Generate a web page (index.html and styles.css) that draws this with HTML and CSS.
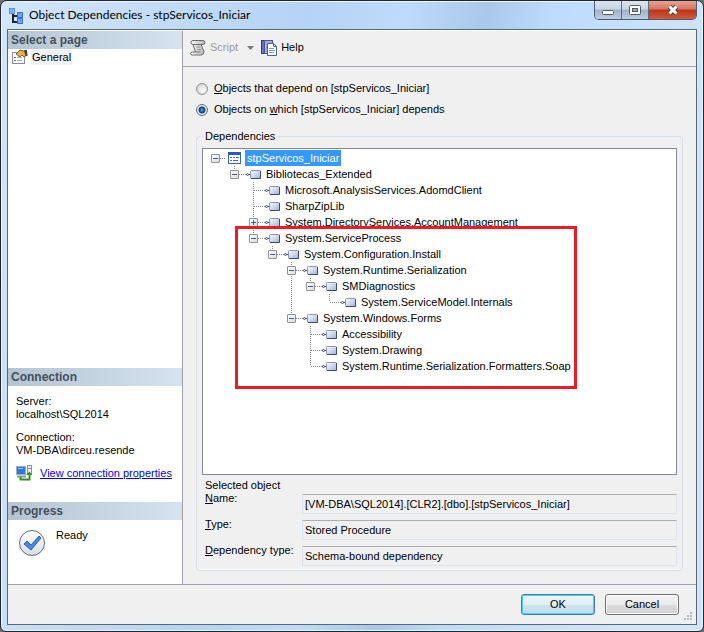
FILE: index.html
```html
<!DOCTYPE html>
<html lang="en">
<head>
  <meta charset="UTF-8">
  <meta name="viewport" content="width=device-width, initial-scale=1.0">
  <title>Object Dependencies - stpServicos_Iniciar</title>
  <link rel="stylesheet" href="styles.css">
</head>
<body>
  <!-- Shared icons -->
  <svg class="defs" width="0" height="0">
    <defs>
      <linearGradient id="blue-box" x1="0" y1="0" x2="1" y2="1">
        <stop offset="0" stop-color="#ffffff"/>
        <stop offset="1" stop-color="#9fb0d8"/>
      </linearGradient>
      <linearGradient id="disc" x1="0" y1="0" x2="0" y2="1">
        <stop offset="0" stop-color="#ffffff"/>
        <stop offset="1" stop-color="#d9dde6"/>
      </linearGradient>
      <linearGradient id="scroll" x1="0" y1="0" x2="1" y2="0">
        <stop offset="0" stop-color="#fafafa"/>
        <stop offset="1" stop-color="#b4b4b4"/>
      </linearGradient>
    </defs>
    <symbol id="node" viewBox="0 0 16 16">
      <path d="M0 8.500h1" stroke="#777"/>
      <circle cx="2.500" cy="8.500" r="1" fill="#fff" stroke="#3c4a78"/>
      <path d="M3.500 8.500h2" stroke="#3c4a78"/>
      <rect x="5.500" y="4.500" width="10" height="8" rx="1" fill="url(#blue-box)" stroke="#8a93b0"/>
      <path d="M6 12.500h9.500v-7.500" fill="none" stroke="#3c4878"/>
    </symbol>
  </svg>

  <div class="window">
    <header class="titlebar">
      <svg class="app-icon" width="16" height="16" viewBox="0 0 16 16">
        <path d="M4 5v9h4M4 8h4" fill="none" stroke="#1c2430" stroke-width="2"/>
        <rect x="0.500" y="0.500" width="5" height="5" fill="#7eb0f4" stroke="#5f8fdc"/>
        <rect x="8.500" y="4.500" width="5" height="5" fill="#6ba2f2" stroke="#3f70c8"/>
        <rect x="8.500" y="10.500" width="5" height="5" fill="#6ba2f2" stroke="#3f70c8"/>
      </svg>
      <h1>Object Dependencies - stpServicos_Iniciar</h1>
      <div class="window-buttons">
        <button type="button" class="win-btn" aria-label="Minimize">
          <svg width="14" height="12" viewBox="0 0 14 12"><rect x="1.500" y="6.500" width="11" height="4" rx="1" fill="#fff" stroke="#50586a"/></svg>
        </button>
        <button type="button" class="win-btn" aria-label="Maximize">
          <svg width="14" height="12" viewBox="0 0 14 12"><rect x="1.500" y="1.500" width="11" height="9" rx="1" fill="#fff" stroke="#50586a"/><rect x="4.500" y="4.500" width="5" height="3" fill="#8faac8" stroke="#50586a"/></svg>
        </button>
        <button type="button" class="win-btn close" aria-label="Close">
          <svg width="14" height="12" viewBox="0 0 14 12"><path d="M3.500 2.500l7 7M10.500 2.500l-7 7" stroke="#50404a" stroke-width="5"/><path d="M3.500 2.500l7 7M10.500 2.500l-7 7" stroke="#fff" stroke-width="3"/></svg>
        </button>
      </div>
    </header>

    <div class="client">
      <div class="panes">
        <aside class="sidebar">
          <section class="pages">
            <h2>Select a page</h2>
            <a href="#" class="page-link">
              <svg width="16" height="16" viewBox="0 0 16 16">
                <rect x="0.500" y="3.500" width="12" height="11" fill="#fff" stroke="#8a8a9c"/>
                <path d="M2 8.500h2M2 11.500h2" stroke="#5468c8"/>
                <path d="M5 8.500h5M5 11.500h5" stroke="#a8acc0"/>
                <path d="M4 5l4-4 4 1 3 4-3 2-2-2-2 2z" fill="#e8b04a" stroke="#80602c"/>
                <path d="M12 1l3 0 0.500 6-2 0z" fill="#4a4438"/>
              </svg>
              <span>General</span>
            </a>
          </section>

          <section>
            <h2>Connection</h2>
            <div class="connection">
              <p>Server:<br>localhost\SQL2014</p>
              <p>Connection:<br>VM-DBA\dirceu.resende</p>
              <div class="properties">
                <svg width="16" height="16" viewBox="0 0 16 16">
                  <rect x="0.500" y="1.500" width="9" height="8" fill="#2a78e0" stroke="#a0acc0"/>
                  <path d="M2 3.500h5" stroke="#9cd0ff"/>
                  <path d="M1 11.500h9" stroke="#8894a8" stroke-width="2"/>
                  <rect x="11.500" y="0.500" width="4" height="9" fill="#eceef2" stroke="#8a90a0"/>
                  <path d="M12 3.500h3" stroke="#8a90a0"/>
                  <path d="M4.500 12v2.500h9v-5" fill="none" stroke="#2c9418" stroke-width="2"/>
                  <path d="M10 10l3.500-3.500 2.500 3.500z" fill="#2c9418"/>
                </svg>
                <a href="#">View connection properties</a>
              </div>
            </div>
          </section>

          <section>
            <h2>Progress</h2>
            <div class="progress">
              <svg width="28" height="28" viewBox="0 0 28 28">
                <circle cx="14" cy="14" r="12.500" fill="url(#disc)" stroke="#5b6b8c"/>
                <path d="M6 15l3-3 4 4 8-9 2 2-10 12z" fill="#4a86e4" stroke="#2f62b8"/>
              </svg>
              <span>Ready</span>
            </div>
          </section>
        </aside>

        <main class="content">
          <div class="toolbar">
            <button type="button" class="tool" disabled>
              <svg width="16" height="16" viewBox="0 0 16 16">
                <path d="M3 0.500h10q2 0 2 2t-2 2h-2l3 7q0 3.500-3 3.500h-8.500q-2 0-2-1.500t2-1.500h3l-2.500-7.500q-2 0-2-2t2-2z" fill="url(#scroll)" stroke="#6c6c6c"/>
                <path d="M3 4.500h8M5.500 12h5" stroke="#6c6c6c"/>
                <path d="M6 7h4M7 9.500h4" stroke="#999"/>
              </svg>
              <span>Script</span>
              <svg class="caret" width="7" height="4" viewBox="0 0 7 4"><path d="M0 0h7l-3.500 4z" fill="#777"/></svg>
            </button>
            <button type="button" class="tool">
              <svg width="16" height="16" viewBox="0 0 16 16">
                <rect x="0.500" y="0.500" width="3" height="13" fill="#6670b8" stroke="#343c80"/>
                <rect x="3.500" y="0.500" width="8" height="13" fill="#a4acdc" stroke="#4c5498"/>
                <path d="M6.500 3.500h6l3 3v9h-9z" fill="#fff" stroke="#4a6478"/>
                <path d="M12.500 3.500v3h3" fill="none" stroke="#4a6478"/>
                <path d="M8 8.500h5M8 10.500h6M8 12.500h5" stroke="#6f9cc8"/>
              </svg>
              <span>Help</span>
            </button>
          </div>

          <form class="form">
            <label class="radio"><input type="radio" name="direction"><span><u>O</u>bjects that depend on [stpServicos_Iniciar]</span></label>
            <label class="radio"><input type="radio" name="direction" checked><span>Objects on <u>w</u>hich [stpServicos_Iniciar] depends</span></label>

            <fieldset class="group">
              <legend>Dependencies</legend>
              <div class="tree-box">
                <ul class="tree">
                  <li>
                    <div class="row"><button type="button" class="toggle" aria-label="Collapse"></button><i class="dots"></i>
                      <svg width="16" height="16" viewBox="0 0 16 16">
                        <rect x="2.500" y="2.500" width="12" height="11" fill="#fff" stroke="#3c64b8"/>
                        <path d="M2 3.500h13" stroke="#2c58c0" stroke-width="3"/>
                        <path d="M4 7.500h2M7 7.500h2M4 10.500h2M7 10.500h5M10 7.500h3" stroke="#5468a8"/>
                      </svg>
                      <span class="label selected">stpServicos_Iniciar</span></div>
                    <ul>
                      <li>
                        <div class="row"><button type="button" class="toggle" aria-label="Collapse"></button><i class="dots"></i><svg width="16" height="16"><use href="#node"/></svg><span class="label">Bibliotecas_Extended</span></div>
                        <ul>
                          <li><div class="row"><i class="dots"></i><svg width="16" height="16"><use href="#node"/></svg><span class="label">Microsoft.AnalysisServices.AdomdClient</span></div></li>
                          <li><div class="row"><i class="dots"></i><svg width="16" height="16"><use href="#node"/></svg><span class="label">SharpZipLib</span></div></li>
                          <li><div class="row"><button type="button" class="toggle plus" aria-label="Expand"></button><i class="dots"></i><svg width="16" height="16"><use href="#node"/></svg><span class="label">System.DirectoryServices.AccountManagement</span></div></li>
                          <li>
                            <div class="row"><button type="button" class="toggle" aria-label="Collapse"></button><i class="dots"></i><svg width="16" height="16"><use href="#node"/></svg><span class="label">System.ServiceProcess</span></div>
                            <ul>
                              <li>
                                <div class="row"><button type="button" class="toggle" aria-label="Collapse"></button><i class="dots"></i><svg width="16" height="16"><use href="#node"/></svg><span class="label">System.Configuration.Install</span></div>
                                <ul>
                                  <li>
                                    <div class="row"><button type="button" class="toggle" aria-label="Collapse"></button><i class="dots"></i><svg width="16" height="16"><use href="#node"/></svg><span class="label">System.Runtime.Serialization</span></div>
                                    <ul>
                                      <li>
                                        <div class="row"><button type="button" class="toggle" aria-label="Collapse"></button><i class="dots"></i><svg width="16" height="16"><use href="#node"/></svg><span class="label">SMDiagnostics</span></div>
                                        <ul>
                                          <li><div class="row"><i class="dots"></i><svg width="16" height="16"><use href="#node"/></svg><span class="label">System.ServiceModel.Internals</span></div></li>
                                        </ul>
                                      </li>
                                    </ul>
                                  </li>
                                  <li>
                                    <div class="row"><button type="button" class="toggle" aria-label="Collapse"></button><i class="dots"></i><svg width="16" height="16"><use href="#node"/></svg><span class="label">System.Windows.Forms</span></div>
                                    <ul>
                                      <li><div class="row"><i class="dots"></i><svg width="16" height="16"><use href="#node"/></svg><span class="label">Accessibility</span></div></li>
                                      <li><div class="row"><i class="dots"></i><svg width="16" height="16"><use href="#node"/></svg><span class="label">System.Drawing</span></div></li>
                                      <li><div class="row"><i class="dots"></i><svg width="16" height="16"><use href="#node"/></svg><span class="label">System.Runtime.Serialization.Formatters.Soap</span></div></li>
                                    </ul>
                                  </li>
                                </ul>
                              </li>
                            </ul>
                          </li>
                        </ul>
                      </li>
                    </ul>
                  </li>
                </ul>
                <div class="highlight"></div>
              </div>

              <div class="details">
                <p>Selected object</p>
                <div class="field">
                  <label for="obj-name"><u>N</u>ame:</label>
                  <input type="text" id="obj-name" value="[VM-DBA\SQL2014].[CLR2].[dbo].[stpServicos_Iniciar]" readonly>
                </div>
                <div class="field">
                  <label for="obj-type"><u>T</u>ype:</label>
                  <input type="text" id="obj-type" value="Stored Procedure" readonly>
                </div>
                <div class="field">
                  <label for="obj-dep"><u>D</u>ependency type:</label>
                  <input type="text" id="obj-dep" value="Schema-bound dependency" readonly>
                </div>
              </div>
            </fieldset>
          </form>
        </main>
      </div>

      <footer class="footer">
        <button type="button" class="btn primary">OK</button>
        <button type="button" class="btn">Cancel</button>
        <svg class="grip" width="10" height="10" viewBox="0 0 10 10">
          <path d="M7 1h2M4 4h2M7 4h2M1 7h2M4 7h2M7 7h2" stroke="#b8b8b8" stroke-width="2"/>
        </svg>
      </footer>
    </div>
  </div>
</body>
</html>
```
FILE: styles.css
```css
* {
  box-sizing: border-box;
}

body {
  margin: 0;
  background: #6d6a70;
  font-family: "Liberation Sans", Arial, sans-serif;
  font-size: 11px;
  line-height: 13px;
  color: #000;
}

h1, h2, p, ul {
  margin: 0;
  padding: 0;
}

button, input {
  font: inherit;
  color: inherit;
  margin: 0;
  padding: 0;
}

svg {
  display: block;
  flex: none;
}

.defs {
  position: absolute;
}

.window {
  display: flex;
  flex-direction: column;
  height: 100vh;
  padding: 0 6px 6px;
  border: 1px solid #23262e;
  border-radius: 7px 7px 6px 6px;
  background: linear-gradient(100deg, #d3e6fa 0, #c3dcf6 20%, #b4d4f5 38%, #bddcfb 50%, #a9c9ea 60%, #bcdcfc 68%, #d0e5fb 90%);
  box-shadow: inset 0 0 0 1px #eaf5ff;
}

/* Title bar */
.titlebar {
  display: flex;
  align-items: flex-start;
  height: 28px;
}

.app-icon {
  margin: 7px 4px 0 2px;
}

.titlebar h1 {
  flex: 1;
  padding-top: 6px;
  font-family: Lato, "Open Sans", sans-serif;
  font-size: 12px;
  font-weight: normal;
  line-height: 16px;
}

.window-buttons {
  display: flex;
  border: 1px solid #4f5c70;
  border-top: none;
  border-radius: 0 0 5px 5px;
  overflow: hidden;
}

.win-btn {
  display: flex;
  align-items: center;
  justify-content: center;
  width: 27px;
  height: 18px;
  border: none;
  border-right: 1px solid #5c6a80;
  background: linear-gradient(#dbe5f0 0, #c8d5e4 45%, #9eb2cc 50%, #bccde2 100%);
}

.win-btn.close {
  width: 47px;
  border-right: none;
  background: linear-gradient(#e8a394 0, #d67562 45%, #b9361c 50%, #d2593c 100%);
}

/* Dialog area */
.client {
  flex: 1;
  display: flex;
  flex-direction: column;
  min-height: 0;
  border: 1px solid #5a6872;
  background: #f0f0f0;
}

.panes {
  flex: 1;
  display: flex;
  min-height: 0;
  border-top: 1px solid #fff;
  border-bottom: 1px solid #a0a0a8;
}

.sidebar {
  display: flex;
  flex-direction: column;
  width: 175px;
  border-right: 1px solid #a0a0a8;
  background: #fff;
}

.sidebar h2 {
  height: 18px;
  padding-left: 3px;
  background: linear-gradient(90deg, #b5c4d2, #d5e3f0);
  color: #42505c;
  font-size: 12px;
  line-height: 18px;
}

.pages {
  flex: 1;
}

.page-link {
  display: flex;
  align-items: center;
  gap: 3px;
  padding-left: 4px;
  color: #000;
  text-decoration: none;
}

.page-link span {
  padding: 1px;
  background: #f0f0f0;
}

.connection {
  padding: 9px 8px 21px;
}

.connection p {
  margin-bottom: 10px;
}

.connection p + p {
  margin-bottom: 8px;
}

.properties {
  display: flex;
  align-items: center;
  gap: 8px;
}

.properties a {
  color: #00f;
}

.progress {
  display: flex;
  gap: 10px;
  height: 64px;
  padding: 9px 10px;
}

/* Right side */
.content {
  flex: 1;
  display: flex;
  flex-direction: column;
  min-width: 0;
}

.toolbar {
  display: flex;
  align-items: center;
  gap: 7px;
  height: 36px;
  padding: 0 7px 2px;
  border-bottom: 1px solid #a0a0a8;
}

.tool {
  display: flex;
  align-items: center;
  gap: 4px;
  border: none;
  background: none;
}

.tool:disabled {
  color: #9a9a9a;
}

.caret {
  margin-left: 5px;
}

.form {
  flex: 1;
  display: flex;
  flex-direction: column;
  min-height: 0;
  padding: 14px 13px 13px;
}

.radio {
  display: flex;
  align-items: center;
  gap: 6px;
  height: 15px;
  margin-bottom: 6px;
}

.radio input {
  appearance: none;
  width: 12px;
  height: 12px;
  border: 1px solid #8e8f8f;
  border-radius: 50%;
  background: radial-gradient(circle at 60% 60%, #f4f4f4 20%, #c4c8cc);
}

.radio input:checked {
  border-color: #56708a;
  background: radial-gradient(circle, #4aa8dc 0, #123c6c 3px, #e4eaf0 4px);
}

.group {
  flex: 1;
  display: flex;
  flex-direction: column;
  min-width: 0;
  min-height: 0;
  margin: 7px 0 0;
  padding: 5px 5px 0;
  border: 1px solid #d5dfe5;
  border-radius: 4px;
  box-shadow: inset 0 -1px #fff;
}

.group legend {
  padding: 0 3px;
}

/* Dependency tree */
.tree-box {
  position: relative;
  flex: 1;
  min-height: 0;
  padding: 1px 8px;
  border: 1px solid #828790;
  background: #fff;
}

.tree ul {
  padding-left: 19px;
}

.tree li {
  list-style: none;
}

.tree ul > li {
  background: repeating-linear-gradient(#808080 0 1px, #fff 1px 2px) 4px 0 / 1px 100% no-repeat;
}

.tree ul > li:last-child {
  background-size: 1px 8px;
}

.row {
  display: flex;
  align-items: center;
  height: 16px;
}

.toggle {
  width: 9px;
  height: 9px;
  border: 1px solid #919191;
  border-radius: 1px;
  background:
    linear-gradient(#3c58a8, #3c58a8) center / 5px 1px no-repeat,
    linear-gradient(135deg, #fff, #dcdcdc);
}

.toggle.plus {
  background:
    linear-gradient(#3c58a8, #3c58a8) center / 5px 1px no-repeat,
    linear-gradient(#3c58a8, #3c58a8) center / 1px 5px no-repeat,
    linear-gradient(135deg, #fff, #dcdcdc);
}

.dots {
  width: 10px;
  height: 1px;
  margin-left: 5px;
  background: repeating-linear-gradient(90deg, #808080 0 1px, #fff 1px 2px);
}

.toggle + .dots {
  width: 6px;
  margin-left: 0;
}

.label {
  height: 16px;
  margin-left: 3px;
  padding: 0 2px;
  line-height: 16px;
  white-space: nowrap;
}

.label.selected {
  background: #3399ff;
  color: #fff;
}

/* Red frame drawn over the System.ServiceProcess branch */
.highlight {
  position: absolute;
  top: 77px;
  left: 32px;
  width: 342px;
  height: 163px;
  border: 3px solid #ed1c24;
  pointer-events: none;
}

/* Selected object */
.details {
  padding: 4px 0 0 3px;
}

.field {
  display: flex;
  align-items: flex-start;
  height: 26px;
}

.field label {
  width: 97px;
}

.field input {
  flex: 1;
  min-width: 0;
  height: 20px;
  margin-top: 2px;
  padding: 0 2px;
  border: 1px solid #dfe5ec;
  border-top-color: #abadb3;
  border-radius: 1px;
  background: #f0f0f0;
}

/* Footer */
.footer {
  display: flex;
  align-items: center;
  justify-content: flex-end;
  gap: 10px;
  height: 39px;
  padding-right: 3px;
}

.btn {
  width: 74px;
  height: 21px;
  border: 1px solid #707070;
  border-radius: 3px;
  background: linear-gradient(#f2f2f2 0, #ebebeb 50%, #dddddd 50%, #cfcfcf 100%);
  box-shadow: inset 0 0 0 1px #fcfcfc;
}

.btn.primary {
  border-color: #3c7fb1;
  background: linear-gradient(#eaf4fa 0, #e0eff8 50%, #cde3f0 50%, #c0dcec 100%);
  box-shadow: inset 0 0 0 1px #48d0f8;
}

.grip {
  align-self: flex-end;
  margin: 0 0 2px -6px;
}
```
